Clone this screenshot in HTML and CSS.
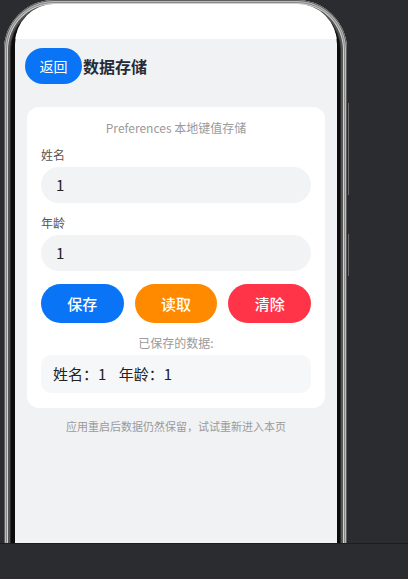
FILE: index.html
```html
<!DOCTYPE html>
<html>

<head>
  <meta charset="utf-8">
  <title>数据存储</title>
  <meta name="viewport" content="width=device-width, initial-scale=1">
  <link rel="stylesheet" href="styles.css">
</head>
<body>
  <div class="device">
    <div class="frame">
      <div class="screen">
        <div class="status-bar"></div>
        <header class="nav">
          <button class="back-btn">返回</button>
          <h1 class="nav-title">数据存储</h1>
        </header>
        <main class="page">
          <section class="card">
            <div class="card-title">Preferences 本地键值存储</div>
            <label class="field-label">姓名</label>
            <div class="field-input">1</div>
            <label class="field-label next">年龄</label>
            <div class="field-input">1</div>
            <div class="actions">
              <button class="action save">保存</button>
              <button class="action read">读取</button>
              <button class="action clear">清除</button>
            </div>
            <div class="saved-caption">已保存的数据:</div>
            <div class="saved-box">
              <span>姓名：1</span>
              <span class="saved-age">年龄：1</span>
            </div>
          </section>
          <p class="hint">应用重启后数据仍然保留，试试重新进入本页</p>
        </main>
      </div>
    </div>
    <span class="side-key key-top"></span>
    <span class="side-key key-bottom"></span>
  </div>
  <div class="dock"></div>
</body>
</html>
```

FILE: styles.css
```css
/* basic style */
body {
  margin: 0;
  background: #2b2c30;
  font-family: "Noto Sans CJK SC", "Noto Sans", sans-serif;
}

.device {
  position: relative;
  height: 543px;
  overflow: hidden;
  padding-left: 4px;
}

/* phone frame */
.frame {
  width: 343px;
  height: 620px;
  box-sizing: border-box;
  padding: 4px 10px 0 11px;
  border-radius: 50px 50px 0 0;
  background: #0c0c0c;
  box-shadow: inset 0 0 0 1px #5e5e5e, inset 0 0 0 2px #b8b8b8, inset 0 0 0 3px #8a8a8a,
    inset 0 0 0 4px #d0d0d0, inset 0 0 0 6px #555, inset 0 0 0 7px #2a2a2a;
}

.screen {
  height: 100%;
  background: #f1f2f4;
  border-radius: 40px 40px 0 0;
  overflow: hidden;
}

.status-bar {
  height: 35px;
  background: #fff;
}

.side-key {
  position: absolute;
  left: 348px;
  width: 1px;
  background: #6a6a6a;
}

.key-top {
  top: 103px;
  height: 92px;
}

.key-bottom {
  top: 234px;
  height: 42px;
}

/* nav bar */
.nav {
  display: flex;
  align-items: center;
  padding: 9px 10px 0;
}

.back-btn {
  height: 36px;
  width: 57px;
  border: 0;
  border-radius: 18px;
  background: #0a74f7;
  color: #fff;
  font-family: inherit;
  font-size: 14px;
  padding: 0;
}

.nav-title {
  margin: 0 0 0 1px;
  font-size: 16px;
  font-weight: bold;
  color: #252b36;
}

/* content */
.page {
  padding: 23px 12px 0;
}

.card {
  display: flex;
  flex-direction: column;
  background: #fff;
  border-radius: 12px;
  padding: 13px 14px 15px;
}

.card-title {
  text-align: center;
  font-size: 12px;
  line-height: 16px;
  color: #9a9a9a;
}

.field-label {
  margin-top: 10px;
  font-size: 12px;
  line-height: 18px;
  color: #555;
}

.field-label.next {
  margin-top: 11px;
}

.field-input {
  margin-top: 3px;
  height: 36px;
  line-height: 36px;
  border-radius: 18px;
  background: #f2f3f5;
  padding-left: 15px;
  font-size: 15px;
  color: #222;
}

.actions {
  display: flex;
  gap: 11px;
  margin-top: 13px;
}

.action {
  flex: 1;
  height: 39px;
  border: 0;
  border-radius: 20px;
  color: #fff;
  font-family: inherit;
  font-size: 15px;
  font-weight: 500;
}

.save {
  background: #0a74f7;
}

.read {
  background: #ff8a00;
}

.clear {
  background: #ff3448;
}

.saved-caption {
  margin-top: 12px;
  text-align: center;
  font-size: 12px;
  line-height: 16px;
  color: #9a9a9a;
}

.saved-box {
  margin-top: 4px;
  height: 38px;
  line-height: 38px;
  border-radius: 10px;
  background: #f6f7f9;
  padding-left: 12px;
  font-size: 15px;
  color: #222;
}

.saved-age {
  margin-left: 9px;
}

.hint {
  margin: 10px 0 0;
  text-align: center;
  font-size: 11px;
  line-height: 16px;
  color: #9a9a9a;
}

.dock {
  height: 36px;
  background: #2b2c30;
  border-top: 1px solid #1c1d20;
}
```
